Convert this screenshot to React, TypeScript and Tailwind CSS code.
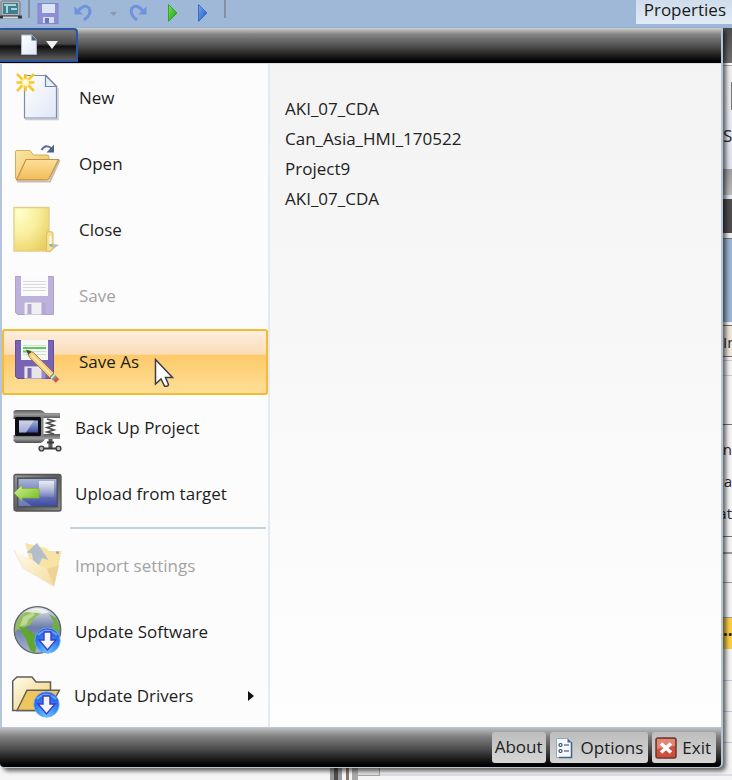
import type { ReactNode } from "react";

const SvgDefs = () => (
  <svg width="0" height="0" className="absolute" aria-hidden="true">
    <defs>
      <linearGradient id="paper" x1="0" y1="0" x2="1" y2="1">
        <stop offset="0" stopColor="#ffffff" />
        <stop offset="1" stopColor="#dfe6f7" />
      </linearGradient>
      <linearGradient id="folderBack" x1="0" y1="0" x2="1" y2="1">
        <stop offset="0" stopColor="#fbe6a4" />
        <stop offset="1" stopColor="#e9c060" />
      </linearGradient>
      <linearGradient id="folderFront" x1="0" y1="0" x2="0" y2="1">
        <stop offset="0" stopColor="#fddf98" />
        <stop offset="1" stopColor="#f0bd58" />
      </linearGradient>
      <linearGradient id="driverBack" x1="0" y1="0" x2="1" y2="1">
        <stop offset="0" stopColor="#fffdf0" />
        <stop offset="1" stopColor="#f0ca66" />
      </linearGradient>
      <radialGradient id="closeFill" cx="0.15" cy="0.1" r="1.1">
        <stop offset="0" stopColor="#ffffc8" />
        <stop offset="0.5" stopColor="#f8ee9c" />
        <stop offset="1" stopColor="#e9cd5c" />
      </radialGradient>
      <linearGradient id="screen" x1="0" y1="0" x2="0" y2="1">
        <stop offset="0" stopColor="#a9b6d6" />
        <stop offset="1" stopColor="#3d4aa0" />
      </linearGradient>
      <linearGradient id="glare" x1="0" y1="0" x2="0" y2="1">
        <stop offset="0" stopColor="#ffffff" stopOpacity="0.75" />
        <stop offset="1" stopColor="#ffffff" stopOpacity="0.1" />
      </linearGradient>
      <linearGradient id="frame" x1="0" y1="0" x2="1" y2="1">
        <stop offset="0" stopColor="#9a9a9a" />
        <stop offset="0.5" stopColor="#5b5b5b" />
        <stop offset="1" stopColor="#8a8a8a" />
      </linearGradient>
      <linearGradient id="clamp" x1="0" y1="0" x2="0" y2="1">
        <stop offset="0" stopColor="#5a5a5a" />
        <stop offset="0.5" stopColor="#9c9ca0" />
        <stop offset="1" stopColor="#4c4c4c" />
      </linearGradient>
      <linearGradient id="uploadArrow" x1="0" y1="0" x2="1" y2="1">
        <stop offset="0" stopColor="#d8f0a0" />
        <stop offset="1" stopColor="#6dbd14" />
      </linearGradient>
      <linearGradient id="ocean" x1="0" y1="0" x2="0" y2="1">
        <stop offset="0" stopColor="#e6e9ee" />
        <stop offset="0.45" stopColor="#6c7da8" />
        <stop offset="1" stopColor="#a9b7cf" />
      </linearGradient>
      <radialGradient id="badge" cx="0.5" cy="0.9" r="0.95">
        <stop offset="0" stopColor="#5fc4ff" />
        <stop offset="0.6" stopColor="#2a75ee" />
        <stop offset="1" stopColor="#2455d8" />
      </radialGradient>
      <linearGradient id="importFront" x1="0" y1="0" x2="1" y2="1">
        <stop offset="0" stopColor="#fffaf0" />
        <stop offset="1" stopColor="#f6dd9c" />
      </linearGradient>
      <linearGradient id="play" x1="0" y1="0" x2="1" y2="1">
        <stop offset="0" stopColor="#7be05c" />
        <stop offset="1" stopColor="#149a10" />
      </linearGradient>
      <linearGradient id="playBlue" x1="0" y1="0" x2="1" y2="1">
        <stop offset="0" stopColor="#78a8ee" />
        <stop offset="1" stopColor="#1b55c0" />
      </linearGradient>
    </defs>
  </svg>
);

const Icon = ({ children }: { children: ReactNode }) => (
  <svg viewBox="0 0 48 48" className="size-12 shrink-0 overflow-visible" fill="none" aria-hidden="true">
    {children}
  </svg>
);

const NewIcon = () => (
  <Icon>
    <path d="M12 45.500H45V14" stroke="#c9ccd2" strokeWidth="1.500" />
    <path d="M11.500 1.500H33L43.500 12.500V44H11.500Z" fill="url(#paper)" stroke="#7d8da5" strokeWidth="1.200" />
    <path d="M32.500 1.500V12.500H43.500Z" fill="#e6f0fb" stroke="#7187a5" strokeWidth="1.200" />
    <circle cx="12.500" cy="8.500" r="5.500" fill="#fff0a0" />
    <g stroke="#f7c92c" strokeWidth="2.600">
      <path d="M12.500 0V5M12.500 12V17.500M3.500 8.500H9M16 8.500H21.500M4 0L9.500 5.500M21 0L15.500 5.500M4 17L9.500 11.500M21 17L15.500 11.500" />
    </g>
    <circle cx="12.500" cy="8.500" r="2.500" fill="#fffdf0" />
  </Icon>
);

const OpenIcon = () => (
  <Icon>
    <path d="M4 41.500H37L46.500 20" stroke="#c4bfb4" strokeWidth="2" />
    <path d="M2.500 38V12Q2.500 10.500 4 10.500H17L20.500 15H34Q36 15 36 17V22L30 39.500H3.500Z" fill="url(#folderBack)" stroke="#d3ab63" />
    <path d="M13 19.500H45.500L36.500 38Q35.500 39.800 34 39.800H3.500Z" fill="url(#folderFront)" stroke="#c58f4e" strokeWidth="1.200" />
    <path d="M28.500 10Q33 3 39 9" stroke="#5c7294" strokeWidth="2" />
    <path d="M41 4.500V12.500H33.500Z" fill="#4d6488" />
  </Icon>
);

const CloseIcon = () => (
  <Icon>
    <path d="M37 45L46 39L41 38L38 44Z" fill="#8e8e88" opacity=".6" />
    <path d="M1 1.500H36V45H1Z" fill="url(#closeFill)" stroke="#e4cd88" strokeWidth="1.300" />
    <path d="M33.500 45V28Q33.500 25.500 36.500 25.500Q40 25.500 40 28V43L37 45.500Z" fill="#f4e392" stroke="#dfc069" strokeWidth="1.200" />
    <path d="M36.500 30Q38.500 29 38.500 31V38H36.500Z" fill="#fffef0" />
    <path d="M36.500 38H39.500V41L36.500 40Z" fill="#75aee8" />
  </Icon>
);

const Floppy = ({ muted = false }: { muted?: boolean }) => (
  <g>
    <path d="M2.500 4.500H40.500V42.500H4.500L2.500 40.500Z" fill={muted ? "#bcb2dc" : "#7863b5"} stroke={muted ? "#aca2d0" : "#62509e"} />
    <rect x="8" y="4" width="27" height="20" fill={muted ? "#fbfbfd" : "#f5f9f5"} />
    <path d="M10 9.500H33M10 12.500H33M10 15.500H33M10 18.500H33" stroke="#d9d9dc" />
    <rect x="11.500" y="30.500" width="21" height="12" fill={muted ? "#b3a7d5" : "#9b8dc8"} />
    <rect x="11.500" y="30.500" width="17" height="12" fill={muted ? "#f0f0f2" : "#e6e6ea"} />
    <rect x="14.500" y="32" width="4" height="10" fill={muted ? "#b3aad3" : "#7d6ab5"} />
  </g>
);

const SaveIcon = () => (
  <Icon>
    <Floppy muted />
  </Icon>
);

const SaveAsIcon = () => (
  <Icon>
    <g transform="translate(0 -2)">
      <Floppy />
      <path d="M10 12H33M10 15.500H18" stroke="#56cf50" strokeWidth="1.800" />
    </g>
    <path d="M14 12.500L20.500 14.500L41 35L36.500 39.500L16.500 19.500Z" fill="#f6cd7c" stroke="#8e6a38" strokeWidth=".8" />
    <path d="M18.500 17L38 36.500" stroke="#fdeeb8" strokeWidth="1.600" />
    <path d="M13 11.500L18.500 13.800L15.500 16.500Z" fill="#4a4038" />
    <path d="M38.500 37L42 40.500" stroke="#7f9a86" strokeWidth="5.500" />
    <path d="M39.500 38L40.500 39" stroke="#e8efe8" strokeWidth="5.500" />
    <path d="M42 40.500L44.500 43" stroke="#d0505c" strokeWidth="5" />
  </Icon>
);

const BackupIcon = () => (
  <Icon>
    <path d="M.5 7L3 6H26Q30 6 32 9H47V14H31L28 15H.5Z" fill="url(#clamp)" />
    <path d="M.5 31H27L31 30H47V35H32Q30 39 26 39H3L.5 37Z" fill="url(#clamp)" />
    <path d="M29 11V34" stroke="#88888b" strokeWidth="3" />
    <rect x="2" y="13" width="26" height="19" rx="1.500" fill="#0c0d12" />
    <rect x="6" y="16.500" width="19" height="12" fill="url(#screen)" />
    <path d="M6 16.500H21L13 28.500H6Z" fill="#e4eaf8" opacity=".6" />
    <path d="M34 15L41 17L34 19L41 21.500L34 23.500L41 26L34 28L41 30" stroke="#4b4b4d" strokeWidth="1.600" />
    <path d="M37.500 35V44" stroke="#58585a" strokeWidth="4" />
    <path d="M34 38.500H41M30 44.500H45" stroke="#39393b" strokeWidth="2" />
    <circle cx="28.500" cy="44.500" r="2.400" fill="#bbb" stroke="#404040" strokeWidth="1.400" />
    <circle cx="45.500" cy="44.500" r="2.400" fill="#bbb" stroke="#404040" strokeWidth="1.400" />
  </Icon>
);

const UploadIcon = () => (
  <Icon>
    <rect x="1" y="4.500" width="47" height="36.500" rx="2" fill="url(#frame)" stroke="#555" strokeWidth="1.300" />
    <rect x="4" y="7.500" width="41" height="30" fill="#4e5056" />
    <rect x="5.500" y="9" width="38" height="27" fill="url(#screen)" />
    <rect x="26" y="11" width="15" height="16" fill="url(#glare)" />
    <path d="M5.500 27L19 36H5.500Z" fill="#c3cbe6" opacity=".35" />
    <path d="M1 23L9 15V18.500H26V28H9V31Z" fill="url(#uploadArrow)" stroke="#84ae3e" strokeWidth=".7" />
  </Icon>
);

const ImportIcon = () => (
  <Icon>
    <path d="M12 1L33 6L36 9L48.500 9L41 44.500L18 24Z" fill="#f8e3a6" />
    <path d="M1 8L34 27L41 44.500L10 26Z" fill="url(#importFront)" />
    <path d="M34 27L41 44.500L46 23Z" fill="#eed396" />
    <path d="M1 8L10 26L41 44.500" stroke="#f3e6c8" />
    <circle cx="44.500" cy="10.500" r="1.500" fill="#9aa7b5" />
    <path d="M24 1L13.500 10.500L19 11.500L20 18L26 23L29 16L35.500 18Z" fill="#b2bec9" />
  </Icon>
);

const DownBadge = () => (
  <g>
    <circle cx="34.500" cy="32.500" r="12.700" fill="url(#badge)" stroke="#79b2f8" strokeWidth=".8" />
    <path d="M25 27Q34 18 44 27" stroke="#8cbcfa" strokeWidth="2" opacity=".7" />
    <path d="M31 24H38V32H43L34.500 42L26 32H31Z" fill="#f1f5ff" stroke="#4236cf" strokeWidth="1.400" />
  </g>
);

const GlobeIcon = () => (
  <Icon>
    <circle cx="24.500" cy="22" r="23.300" fill="url(#ocean)" stroke="#5d646c" strokeWidth="1.200" />
    <path d="M6 10Q13 1 24 2L29 5L22 9L17 17L10 20L13 25L5 21L2 24Q2 15 6 10Z" fill="#92bd5c" />
    <path d="M10 9L20 4L22 7L16 11L13 17L7 18Z" fill="#c8dea4" opacity=".8" />
    <path d="M6 19L13 20L22 27L24 36L22 45L17 42L13 31Z" fill="#62a52f" />
    <path d="M36 6L43 10L47 20L45 29L38 20L41 14Z" fill="#70ad43" />
    <path d="M12 4Q24 -3 36 4Q30 7 24 5Z" fill="#fff" opacity=".7" />
    <DownBadge />
  </Icon>
);

const DriversIcon = () => (
  <Icon>
    <path d="M.700 38.500V9L5 5H20L24 10H38.500V38.500Z" fill="url(#driverBack)" stroke="#5e5e5e" strokeWidth="1.500" />
    <path d="M15 18.200H47.500L36 38.500H5Z" fill="#efc65b" stroke="#5e5e5e" strokeWidth="1.400" />
    <DownBadge />
  </Icon>
);

const QuickBar = () => (
  <header className="flex h-7 shrink-0 items-start justify-between overflow-hidden bg-[#9fb8d8]">
    <div className="flex h-7 items-start">
      <svg width="28" height="28" fill="none" aria-hidden="true">
        <rect x="1" y="1" width="19" height="15" rx="1.500" fill="#b3b5b4" stroke="#70767a" />
        <rect x="3" y="3" width="15" height="11" fill="#3d7f90" />
        <path d="M4 5H16M7 5V13M11 9H17" stroke="#a8d4d8" strokeWidth="2" />
        <path d="M0 15.500H22V18.500H0Z" fill="#33383b" />
        <path d="M3 17.500H18" stroke="#d4d8da" strokeWidth="2" />
      </svg>
      <span className="h-[18px] w-[2px] bg-[#8290a3]" />
      <button type="button" aria-label="Save project" className="ml-1">
        <svg width="28" height="28" viewBox="0 0 28 28" aria-hidden="true">
          <rect x="4" y="3.500" width="20" height="20" fill="#8d8fd2" stroke="#8187cc" />
          <rect x="8" y="4" width="13" height="9" fill="#dbe5f6" />
          <rect x="9" y="17" width="11" height="6" fill="#d7ddf1" />
          <rect x="11" y="18" width="4" height="5" fill="#7174b9" />
        </svg>
      </button>
      <button type="button" aria-label="Undo" className="ml-1.5 px-1">
        <svg width="24" height="28" viewBox="0 0 24 28" fill="none" aria-hidden="true">
          <path d="M6 11Q12 3.500 17 8Q20.500 14 12 20" stroke="#6f92dc" strokeWidth="3" />
          <path d="M2.500 6.500V14.500H11Z" fill="#6f92dc" />
        </svg>
      </button>
      <button type="button" aria-label="Undo history" className="ml-1 flex h-7 w-5 items-center justify-center">
        <svg width="8" height="5" aria-hidden="true">
          <path d="M0 0H7L3.500 4Z" fill="#9097a8" />
        </svg>
      </button>
      <button type="button" aria-label="Redo" className="px-1">
        <svg width="24" height="28" viewBox="0 0 24 28" fill="none" aria-hidden="true">
          <path d="M15 11Q9 3.500 4 8Q1 14 9 20" stroke="#6f92dc" strokeWidth="3" />
          <path d="M18.500 6.500V14.500H10Z" fill="#6f92dc" />
        </svg>
      </button>
      <button type="button" aria-label="Run" className="ml-1.5 px-1">
        <svg width="16" height="28" viewBox="0 0 16 28" aria-hidden="true">
          <path d="M2.500 4.500L11 13L2.500 21.500Z" fill="url(#play)" stroke="#35a62d" />
        </svg>
      </button>
      <button type="button" aria-label="Simulate" className="ml-1.5 px-1">
        <svg width="16" height="28" viewBox="0 0 16 28" aria-hidden="true">
          <path d="M2.500 4.500L11 13L2.500 21.500Z" fill="url(#playBlue)" stroke="#3a6ec6" />
        </svg>
      </button>
      <span className="ml-2 h-[18px] w-[2px] bg-[#8290a3]" />
    </div>
    <button type="button" className="h-6 shrink-0 bg-gradient-to-b from-[#cfdcec] to-[#e2ebf5] pr-1.5 pb-1 pl-2 leading-5 text-[#1a1a1a]">
      Properties
    </button>
  </header>
);

type Entry = { label: string; icon: ReactNode; disabled?: boolean; active?: boolean; submenu?: boolean; layout: string };

const wide = "h-[66px] gap-[18px] pl-[11px]";
const narrow = "h-[66px] gap-[14px] pl-[11px]";

const fileEntries: Entry[] = [
  { label: "New", icon: <NewIcon />, layout: wide },
  { label: "Open", icon: <OpenIcon />, layout: wide },
  { label: "Close", icon: <CloseIcon />, layout: wide },
  { label: "Save", icon: <SaveIcon />, layout: wide, disabled: true },
  { label: "Save As", icon: <SaveAsIcon />, layout: wide, active: true },
  { label: "Back Up Project", icon: <BackupIcon />, layout: narrow },
  { label: "Upload from target", icon: <UploadIcon />, layout: narrow },
];

const toolEntries: Entry[] = [
  { label: "Import settings", icon: <ImportIcon />, layout: narrow, disabled: true },
  { label: "Update Software", icon: <GlobeIcon />, layout: narrow },
  { label: "Update Drivers", icon: <DriversIcon />, layout: "h-[62px] gap-[14px] pl-[10px]", submenu: true },
];

const MenuEntry = ({ entry }: { entry: Entry }) => (
  <button
    type="button"
    role="menuitem"
    disabled={entry.disabled}
    className={`relative flex w-full shrink-0 items-center text-left ${entry.layout} ${
      entry.active
        ? "rounded-[3px] bg-[linear-gradient(180deg,#fdf0e2_0%,#fbdcb8_38%,#fdca69_40%,#fee09a_100%)] shadow-[inset_0_0_0_2px_#f5bb33]"
        : ""
    } ${entry.disabled ? "text-[#a3a3a3]" : "text-[#1c1c1c]"}`}
  >
    {entry.icon}
    <span>{entry.label}</span>
    {entry.submenu && (
      <svg width="8" height="12" className="mr-[13px] ml-auto" aria-hidden="true">
        <path d="M1 1L7 6L1 11Z" fill="#111" />
      </svg>
    )}
    {entry.active && (
      <svg width="20" height="32" viewBox="0 0 20 32" className="absolute top-[29px] left-[152px]" aria-hidden="true">
        <path d="M1.500 1.500V26L7 21L10.500 28Q14 29 14.500 26.500L11.500 19.500H18.500Z" fill="#fff" stroke="#3c3c46" strokeWidth="1.500" />
      </svg>
    )}
  </button>
);

const recent = ["AKI_07_CDA", "Can_Asia_HMI_170522", "Project9", "AKI_07_CDA"];

const footerButton =
  "flex h-[31px] items-center rounded-[3px] bg-gradient-to-b from-[#bdbdbd] to-[#d6d6d6] text-[#1c1c1c]";

const MenuFooter = () => (
  <footer className="flex h-[40px] shrink-0 items-start justify-end gap-1 rounded-b-[4px] border-t border-[#b8c6d6] bg-[linear-gradient(180deg,#bdbdbd_0%,#808080_22%,#4a4a4a_55%,#000_95%)] pt-1 pr-[5px]">
    <button type="button" className={`${footerButton} px-[3px] pb-[2px]`}>
      About
    </button>
    <button type="button" className={`${footerButton} gap-2 px-[5px]`}>
      <svg width="18" height="22" viewBox="0 0 18 22" fill="none" aria-hidden="true">
        <path d="M1.500 1.500H12.500L16.500 5.500V20.500H1.500Z" fill="#f5f8fd" stroke="#97a8c0" />
        <path d="M12.500 1.500V5.500H16.500Z" fill="#3e6796" />
        <path d="M16.500 5V20.500H4" stroke="#44658c" strokeWidth="1.500" />
        <circle cx="5.500" cy="8" r="1.500" stroke="#39465a" strokeWidth="1.200" />
        <circle cx="5.500" cy="14" r="1.500" stroke="#39465a" strokeWidth="1.200" />
        <path d="M9 8H14M9 14H14" stroke="#6e7f98" strokeWidth="1.500" />
      </svg>
      Options
    </button>
    <button type="button" className={`${footerButton} gap-[5px] pr-[5px] pl-[3px]`}>
      <svg width="22" height="22" viewBox="0 0 22 22" fill="none" aria-hidden="true">
        <rect x="1" y="1" width="20" height="20" rx="2" fill="#cf4f38" stroke="#6e3832" strokeWidth="1.500" />
        <path d="M2 2H20V9Q11 10 2 12Z" fill="#e79583" opacity=".8" />
        <path d="M6 6.500L16 15.500M16 6.500L6 15.500" stroke="#fff" strokeWidth="3.500" />
      </svg>
      Exit
    </button>
  </footer>
);

/* Sliver of the editor window that stays visible to the right of the open menu. */
const EditorEdge = () => (
  <aside aria-hidden="true" className="flex w-[9px] shrink-0 flex-col overflow-hidden bg-[#f3f2f2] text-[17px] whitespace-nowrap text-[#26262c]">
    <div className="h-[35px] shrink-0 bg-gradient-to-b from-[#4c4c4c] to-[#707070]" />
    <div className="h-[3px] shrink-0 border-b border-[#a9a9a9] bg-white" />
    <div className="flex h-[103px] shrink-0 flex-col bg-gradient-to-b from-[#eeeeee] to-[#dde1ee]">
      <span className="mt-4 ml-2 h-7 border-l-2 border-[#77777a]" />
      <span className="mt-3 leading-7">S</span>
    </div>
    <div className="h-[26px] shrink-0 bg-gradient-to-b from-[#9c9c9c] to-[#b9b9b9]" />
    <div className="h-1 shrink-0 bg-[#dfe7f3]" />
    <div className="h-[34px] shrink-0 bg-[#4c4c4c]" />
    <div className="h-[6px] shrink-0 border-b border-[#7a7a7a] bg-[#eeeeee]" />
    <div className="h-[83px] shrink-0 bg-[#9cb3d3]" />
    <div className="h-[3px] shrink-0 bg-[#f4f4f4]" />
    <div className="h-[32px] shrink-0 border-y border-[#7d6a5e] bg-[#ece7da] text-[15px] leading-8">In</div>
    <div className="h-[4px] shrink-0 border-b border-[#c9c9c9]" />
    <div className="h-[15px] shrink-0 border-b border-[#c9c9c9]" />
    <div className="h-[49px] shrink-0 border-b border-[#7d6a5e]" />
    <div className="flex h-[112px] shrink-0 flex-col items-end border-b border-[#7d6a5e] pt-2 text-[15px] leading-8">
      <span>n</span>
      <span>ca</span>
      <span>at</span>
    </div>
    <div className="h-[17px] shrink-0 border-b-2 border-[#9a9a9a]" />
    <div className="h-[29px] shrink-0 border-b border-[#9a9a9a]" />
    <div className="h-[35px] shrink-0 border-b border-[#9a9a9a]" />
    <div className="h-[31px] shrink-0 bg-[#f8cd45] leading-6 font-bold">...</div>
    <div className="h-[32px] shrink-0 border-b border-[#c0c8dd]" />
    <div className="h-[31px] shrink-0 border-b border-[#c0c8dd]" />
    <div className="h-[31px] shrink-0 border-b border-[#c0c8dd]" />
  </aside>
);

export default function App() {
  return (
    <div className="flex min-h-screen flex-col bg-[#f5f5f6] font-['Open_Sans','Noto_Sans',sans-serif] text-[17px]">
      <SvgDefs />
      <QuickBar />
      <div className="flex grow">
        <main className="z-10 flex min-w-0 grow flex-col rounded-b-[5px] border-r-2 border-b border-[#b6c5d6] bg-[#b6c5d6] shadow-[3px_3px_4px_#00000099]">
          <div className="flex h-[35px] shrink-0 bg-[linear-gradient(180deg,#d0d0d0_0%,#858585_18%,#4a4a4a_55%,#000_95%)]">
            <button
              type="button"
              aria-label="Application menu"
              className="flex h-[34px] w-[78px] items-center gap-2 rounded-tr-[4px] border-2 border-l-0 border-[#2a55a5] bg-[linear-gradient(180deg,#7b7b7b_0%,#484848_45%,#101010_55%,#5d5d5d_100%)] pl-5"
            >
              <svg width="18" height="22" viewBox="0 0 18 22" aria-hidden="true">
                <path d="M1.500 1H12L16.500 6V20.500H1.500Z" fill="url(#paper)" stroke="#a9b4c6" />
                <path d="M11.500 1V6.500H17Z" fill="#4a607f" />
              </svg>
              <svg width="12" height="8" aria-hidden="true">
                <path d="M0 0H12L6 8Z" fill="#f0f0f0" />
              </svg>
            </button>
          </div>
          <div className="flex grow border-t border-[#d5dde6]">
            <nav role="menu" aria-label="File" className="flex w-[270px] shrink-0 flex-col border-r-2 border-l-2 border-r-[#e3eaf2] border-l-[#b5c6dc] bg-[#fcfcfc] pt-px">
              {fileEntries.map((e) => (
                <MenuEntry key={e.label} entry={e} />
              ))}
              <hr className="mr-0.5 mb-1 ml-[68px] border-t-2 border-[#c3d1e4]" />
              {toolEntries.map((e) => (
                <MenuEntry key={e.label} entry={e} />
              ))}
            </nav>
            <section aria-label="Recent projects" className="grow bg-gradient-to-b from-[#f3f3f3] to-[#fefefe] px-[15px] pt-[30px]">
              <ul>
                {recent.map((name, i) => (
                  <li key={i}>
                    <a href="#recent" className="block leading-[30px] text-[#222]">
                      {name}
                    </a>
                  </li>
                ))}
              </ul>
            </section>
          </div>
          <MenuFooter />
        </main>
        <EditorEdge />
      </div>
      <div aria-hidden="true" className="flex h-3 shrink-0 bg-[#f5f5f6]">
        <div className="w-[330px] shrink-0" />
        <div className="w-[12px] shrink-0 border-x-4 border-[#9b9b9b] bg-[#4d4d4d]" />
        <div className="ml-1 w-[3px] shrink-0 bg-[#8c7468]" />
        <div className="ml-[3px] w-[6px] shrink-0 bg-[#a9a9a9]" />
        <div className="h-2 w-[22px] shrink-0 border-r border-b border-[#a5a5a5] bg-[#dedede]" />
        <div className="h-2 grow border-b-2 border-[#dbdfec] bg-[#f1f1f4]" />
      </div>
    </div>
  );
}
